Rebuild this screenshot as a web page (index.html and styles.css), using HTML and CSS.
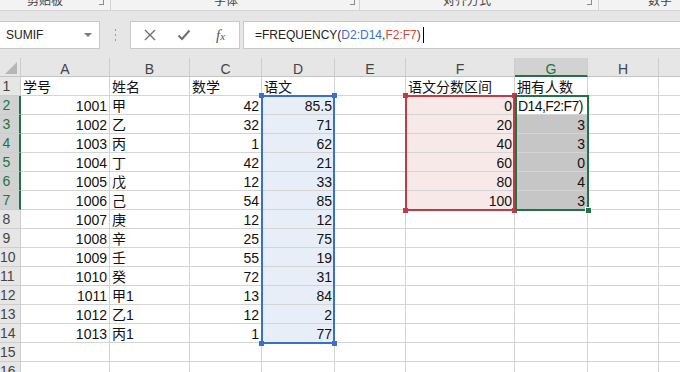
FILE: index.html
```html
<!DOCTYPE html>
<html lang="zh">
<head>
    <meta charset="UTF-8">
    <title>FREQUENCY</title>
    <link rel="stylesheet" href="styles.css">
</head>
<body>
    <!-- Cinta de opciones (solo la fila de nombres de grupo) -->
    <div class="ribbon">
        <div class="group g1"><span class="group-label">剪贴板</span><span class="launcher"></span></div>
        <div class="group g2"><span class="group-label">字体</span><span class="launcher"></span></div>
        <div class="group g3"><span class="group-label">对齐方式</span><span class="launcher"></span></div>
        <div class="group g4"><span class="group-label">数字</span></div>
    </div>

    <!-- Barra de fórmulas -->
    <div class="formula-bar">
        <div class="name-box"><span>SUMIF</span><span class="caret"></span></div>
        <div class="grip"><i></i><i></i><i></i></div>
        <div class="fx-buttons">
            <svg class="icon-cancel" width="12" height="12" viewBox="0 0 12 12"><path d="M1 1L11 11M11 1L1 11" stroke="#707070" stroke-width="1.4" fill="none"/></svg>
            <svg class="icon-enter" width="14" height="12" viewBox="0 0 14 12"><path d="M1.5 6.5L5 10L12.5 1.5" stroke="#707070" stroke-width="2" fill="none"/></svg>
            <span class="fx">f<span>x</span></span>
        </div>
        <div class="formula-input">
            <span>=FREQUENCY(</span><span class="ref-blue">D2:D14</span><span>,</span><span class="ref-red">F2:F7</span><span class="paren">)</span><span class="cursor"></span>
        </div>
    </div>

    <!-- Hoja de cálculo -->
    <div class="sheet">
        <div class="hd corner"><span class="corner-tri"></span></div>
        <div class="hd">A</div><div class="hd">B</div><div class="hd">C</div><div class="hd">D</div>
        <div class="hd">E</div><div class="hd">F</div><div class="hd hd-sel">G</div><div class="hd">H</div><div class="hd">I</div>

        <div class="rh">1</div>
        <div class="c">学号</div><div class="c">姓名</div><div class="c">数学</div><div class="c">语文</div>
        <div class="c"></div><div class="c">语文分数区间</div><div class="c">拥有人数</div><div class="c"></div><div class="c"></div>

        <div class="rh rh-sel">2</div>
        <div class="c n">1001</div><div class="c">甲</div><div class="c n">42</div><div class="c n blue">85.5</div>
        <div class="c"></div><div class="c n red">0</div><div class="c edit">D14,F2:F7)</div><div class="c"></div><div class="c"></div>

        <div class="rh rh-sel">3</div>
        <div class="c n">1002</div><div class="c">乙</div><div class="c n">32</div><div class="c n blue">71</div>
        <div class="c"></div><div class="c n red">20</div><div class="c n sel">3</div><div class="c"></div><div class="c"></div>

        <div class="rh rh-sel">4</div>
        <div class="c n">1003</div><div class="c">丙</div><div class="c n">1</div><div class="c n blue">62</div>
        <div class="c"></div><div class="c n red">40</div><div class="c n sel">3</div><div class="c"></div><div class="c"></div>

        <div class="rh rh-sel">5</div>
        <div class="c n">1004</div><div class="c">丁</div><div class="c n">42</div><div class="c n blue">21</div>
        <div class="c"></div><div class="c n red">60</div><div class="c n sel">0</div><div class="c"></div><div class="c"></div>

        <div class="rh rh-sel">6</div>
        <div class="c n">1005</div><div class="c">戊</div><div class="c n">12</div><div class="c n blue">33</div>
        <div class="c"></div><div class="c n red">80</div><div class="c n sel">4</div><div class="c"></div><div class="c"></div>

        <div class="rh rh-sel">7</div>
        <div class="c n">1006</div><div class="c">己</div><div class="c n">54</div><div class="c n blue">85</div>
        <div class="c"></div><div class="c n red">100</div><div class="c n sel">3</div><div class="c"></div><div class="c"></div>

        <div class="rh">8</div>
        <div class="c n">1007</div><div class="c">庚</div><div class="c n">12</div><div class="c n blue">12</div>
        <div class="c"></div><div class="c"></div><div class="c"></div><div class="c"></div><div class="c"></div>

        <div class="rh">9</div>
        <div class="c n">1008</div><div class="c">辛</div><div class="c n">25</div><div class="c n blue">75</div>
        <div class="c"></div><div class="c"></div><div class="c"></div><div class="c"></div><div class="c"></div>

        <div class="rh">10</div>
        <div class="c n">1009</div><div class="c">壬</div><div class="c n">55</div><div class="c n blue">19</div>
        <div class="c"></div><div class="c"></div><div class="c"></div><div class="c"></div><div class="c"></div>

        <div class="rh">11</div>
        <div class="c n">1010</div><div class="c">癸</div><div class="c n">72</div><div class="c n blue">31</div>
        <div class="c"></div><div class="c"></div><div class="c"></div><div class="c"></div><div class="c"></div>

        <div class="rh">12</div>
        <div class="c n">1011</div><div class="c">甲1</div><div class="c n">13</div><div class="c n blue">84</div>
        <div class="c"></div><div class="c"></div><div class="c"></div><div class="c"></div><div class="c"></div>

        <div class="rh">13</div>
        <div class="c n">1012</div><div class="c">乙1</div><div class="c n">12</div><div class="c n blue">2</div>
        <div class="c"></div><div class="c"></div><div class="c"></div><div class="c"></div><div class="c"></div>

        <div class="rh">14</div>
        <div class="c n">1013</div><div class="c">丙1</div><div class="c n">1</div><div class="c n blue">77</div>
        <div class="c"></div><div class="c"></div><div class="c"></div><div class="c"></div><div class="c"></div>

        <div class="rh">15</div>
        <div class="c"></div><div class="c"></div><div class="c"></div><div class="c"></div>
        <div class="c"></div><div class="c"></div><div class="c"></div><div class="c"></div><div class="c"></div>

        <div class="rh">16</div>
        <div class="c"></div><div class="c"></div><div class="c"></div><div class="c"></div>
        <div class="c"></div><div class="c"></div><div class="c"></div><div class="c"></div><div class="c"></div>

        <!-- Rangos referenciados por la fórmula -->
        <div class="range range-blue">
            <span class="handle tl"></span><span class="handle tr"></span>
            <span class="handle bl"></span><span class="handle br"></span>
        </div>
        <div class="range range-red">
            <span class="handle tl"></span><span class="handle tr"></span>
            <span class="handle bl"></span><span class="handle br"></span>
        </div>
        <div class="range range-green">
            <span class="handle fill"></span>
        </div>
    </div>
</body>
</html>
```

FILE: styles.css
```css
* {
    margin: 0;
    padding: 0;
    box-sizing: border-box;
}

body {
    width: 680px;
    height: 372px;
    overflow: hidden;
    background: #e6e6e6;
    font-family: 'Liberation Sans', 'Noto Sans CJK SC', sans-serif;
}

/* Cinta */
.ribbon {
    display: flex;
    height: 11px;
    background: #f3f3f3;
    border-bottom: 1px solid #d4d4d4;
    overflow: hidden;
}

.group {
    display: flex;
    align-items: flex-start;
    border-right: 1px solid #d2d2d2;
}

.group-label {
    flex: 1;
    text-align: center;
    font: 12px/12px 'Noto Sans CJK SC', sans-serif;
    color: #444;
    margin-top: -6px;
}

.launcher {
    width: 5px;
    height: 5px;
    margin-right: 6px;
    border-right: 1px solid #8a8a8a;
    border-bottom: 1px solid #8a8a8a;
}

.g1 { width: 111px; }
.g1 .group-label { padding-right: 9px; }
.g2 { width: 249px; }
.g2 .launcher { margin-right: 4px; }
.g2 .group-label { padding-right: 9px; }
.g3 { width: 239px; }
.g3 .group-label { padding-right: 13px; }
.g4 { flex: 1; border-right: none; }
.g4 .group-label { flex: none; padding-left: 49px; }

/* Barra de fórmulas */
.formula-bar {
    display: flex;
    height: 28px;
    margin: 10px 0 9px;
}

.name-box {
    width: 101px;
    margin-left: -1px;
    background: white;
    border: 1px solid #c8c8c8;
    display: flex;
    align-items: center;
    justify-content: space-between;
    padding: 0 7px 0 6px;
    font-size: 12px;
    color: #222;
}

.caret {
    width: 0;
    height: 0;
    border-left: 4px solid transparent;
    border-right: 4px solid transparent;
    border-top: 4px solid #7a7a7a;
}

.grip {
    width: 30px;
    display: flex;
    flex-direction: column;
    align-items: center;
    justify-content: center;
    gap: 3px;
}

.grip i {
    width: 1px;
    height: 2px;
    background: #9a9a9a;
}

.fx-buttons {
    width: 110px;
    background: white;
    border: 1px solid #c8c8c8;
    display: flex;
    align-items: center;
    padding-left: 13px;
}

.icon-enter {
    margin-left: 21px;
}

.fx {
    margin-left: 25px;
    font: italic 15px 'Liberation Serif', serif;
    color: #555;
}

.fx span {
    font-size: 11px;
}

.formula-input {
    flex: 1;
    margin-left: 3px;
    background: white;
    border: 1px solid #c8c8c8;
    border-right: none;
    display: flex;
    align-items: center;
    padding-left: 11px;
    font-size: 12px;
    line-height: 26px;
    color: #222;
    white-space: nowrap;
}

.ref-blue { color: #3a6fd0; }
.ref-red { color: #d8483a; }
.paren { color: #5c2b55; }

.cursor {
    width: 1px;
    height: 16px;
    margin-left: 2px;
    background: #000;
}

/* Hoja */
.sheet {
    position: relative;
    display: grid;
    grid-template-columns: 21px 89px 80px 72px 73px 71px 109px 73px 71px 72px;
    grid-auto-rows: 19px;
    width: 731px;
    background: white;
}

.hd {
    background: #e6e6e6;
    border-right: 1px solid #cdcdcd;
    border-bottom: 1px solid #c4c4c4;
    text-align: center;
    padding-top: 3px;
    font-size: 14px;
    line-height: 17px;
    color: #444;
}

.hd-sel {
    background: #d2d2d2;
    color: #217346;
    border-bottom: 2px solid #217346;
}

.corner {
    position: relative;
}

.corner-tri {
    position: absolute;
    right: 3px;
    bottom: 2px;
    width: 0;
    height: 0;
    border-left: 12px solid transparent;
    border-bottom: 12px solid #b6b6b6;
}

.rh {
    background: #e6e6e6;
    border-right: 1px solid #cdcdcd;
    border-bottom: 1px solid #cdcdcd;
    padding: 1px 7px 0 0;
    text-align: center;
    font-size: 14px;
    line-height: 17px;
    color: #444;
    white-space: nowrap;
}

.rh-sel {
    background: #d2d2d2;
    color: #217346;
    border-right: 2px solid #217346;
    padding-right: 6px;
}

.c {
    border-right: 1px solid #d4d4d4;
    border-bottom: 1px solid #d4d4d4;
    padding: 2px 2px 0;
    font-size: 14px;
    line-height: 17px;
    color: #111;
    white-space: nowrap;
    overflow: hidden;
}

.n { text-align: right; }
.blue { background: #e8eef8; }
.red { background: #f8e9e9; }
.sel { background: #c6c6c6; }

.edit {
    background: white;
    padding-left: 3px;
    letter-spacing: -0.6px;
}

/* Bordes de rango encima de las celdas */
.range {
    position: absolute;
    border: 2px solid;
}

.range-blue {
    left: 261px;
    top: 37px;
    width: 74px;
    height: 249px;
    border-color: #3a6fd0;
}

.range-red {
    left: 405px;
    top: 37px;
    width: 110px;
    height: 116px;
    border-color: #c23a44;
}

.range-green {
    left: 515px;
    top: 37px;
    width: 74px;
    height: 116px;
    border-color: #217346;
}

.handle {
    position: absolute;
    width: 5px;
    height: 5px;
}

.range-blue .handle { background: #3a6fd0; }
.range-red .handle { background: #c23a44; }

.tl { left: -4px; top: -4px; }
.tr { right: -4px; top: -4px; }
.bl { left: -4px; bottom: -4px; }
.br { right: -4px; bottom: -4px; }

.fill {
    right: -5px;
    bottom: -5px;
    width: 7px;
    height: 7px;
    background: #217346;
    border: 1px solid white;
}
```
